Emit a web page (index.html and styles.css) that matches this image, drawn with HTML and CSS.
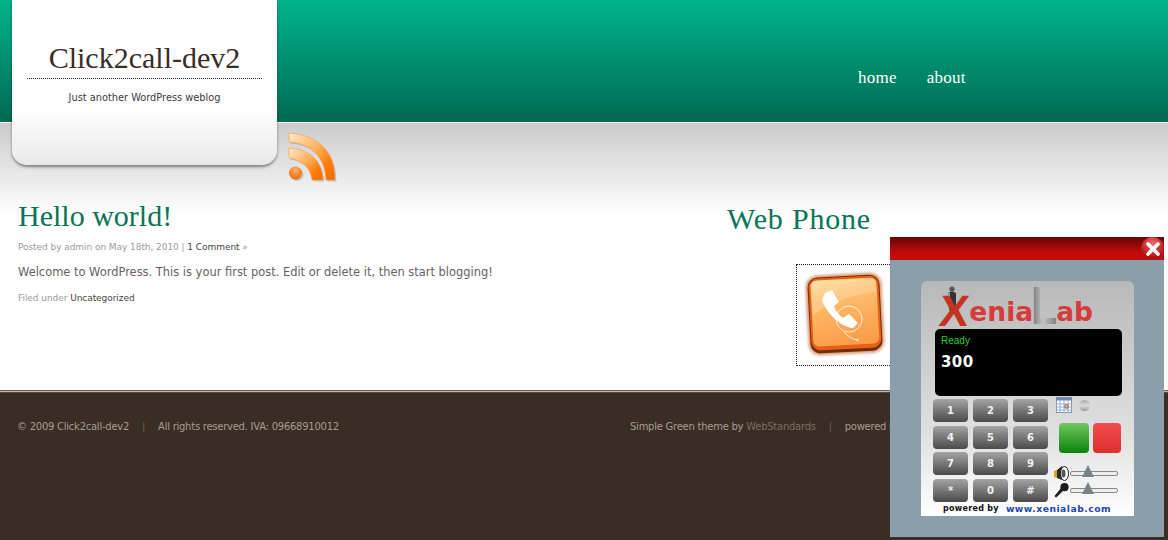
FILE: index.html
```html
<!DOCTYPE html>
<html lang="en">
	<head>
		<meta charset="UTF-8" />
		<meta name="viewport" content="width=device-width, initial-scale=1.0" />
		<title>Click2call-dev2</title>
		<link rel="stylesheet" href="styles.css">
	</head>
	<body>
		<header class="site-header">
			<div class="logo-card">
				<h1 class="site-title">Click2call-dev2</h1>
				<p class="tagline">Just another WordPress weblog</p>
			</div>
			<nav class="main-nav">
				<a href="#">home</a>
				<a href="#">about</a>
			</nav>
		</header>

		<div class="content-band">
			<svg class="rss-icon" width="50" height="52" viewBox="0 0 50 52">
				<defs>
					<linearGradient id="rssGrad" x1="0" y1="0" x2="1" y2="0.9">
						<stop offset="0" stop-color="#ffe6c6" />
						<stop offset="0.5" stop-color="#ffb05a" />
						<stop offset="0.78" stop-color="#ff7d0a" />
						<stop offset="1" stop-color="#f56c00" />
					</linearGradient>
					<radialGradient id="rssDot" cx="0.5" cy="0.3" r="0.7">
						<stop offset="0" stop-color="#ffb069" />
						<stop offset="1" stop-color="#ee6a00" />
					</radialGradient>
				</defs>
				<g fill="#888" opacity="0.4" transform="translate(1.5 1.5)">
					<circle cx="7.5" cy="42" r="6.5" />
					<path d="M1 17 C22 18 34 30 35 49 L24 49 C23 37 14 29 1 27 Z" />
					<path d="M1 2 C30 4 47 20 47 49 L38 49 C37 26 24 13 1 11 Z" />
				</g>
				<circle cx="7.5" cy="42" r="6.5" fill="url(#rssDot)" />
				<path d="M1 17 C22 18 34 30 35 49 L24 49 C23 37 14 29 1 27 Z" fill="url(#rssGrad)" stroke="#f59a45" stroke-width="0.6" />
				<path d="M1 2 C30 4 47 20 47 49 L38 49 C37 26 24 13 1 11 Z" fill="url(#rssGrad)" stroke="#f59a45" stroke-width="0.6" />
			</svg>

			<div class="columns">
				<main class="post">
					<h2 class="post-title">Hello world!</h2>
					<p class="post-meta">Posted by admin on May 18th, 2010 | <a href="#">1 Comment</a> »</p>
					<p class="post-body">Welcome to WordPress. This is your first post. Edit or delete it, then start blogging!</p>
					<p class="post-meta">Filed under <a href="#">Uncategorized</a></p>
				</main>
				<aside class="sidebar">
					<h2 class="widget-title">Web Phone</h2>
					<div class="call-box">
						<svg width="84" height="90" viewBox="0 0 84 90">
							<defs>
								<linearGradient id="tileGrad" x1="0" y1="0" x2="0.2" y2="1">
									<stop offset="0" stop-color="#ffdc94" />
									<stop offset="0.3" stop-color="#ffbf6d" />
									<stop offset="1" stop-color="#fb9f4b" />
								</linearGradient>
								<filter id="tileGlow" x="-10%" y="-10%" width="120%" height="120%">
									<feGaussianBlur stdDeviation="1.6" />
								</filter>
							</defs>
							<g transform="rotate(-3 42 45)">
								<rect x="3" y="5" width="76" height="80" rx="12" fill="#c9744a" opacity="0.75" filter="url(#tileGlow)" />
								<rect x="5" y="7" width="72" height="76" rx="10" fill="#6d2f0c" />
								<rect x="6" y="8" width="70" height="72" rx="9" fill="#ea5f12" />
								<rect x="8" y="10" width="66" height="66" rx="6" fill="url(#tileGrad)" />
								<path d="M9 16 Q9 11 14 11 L68 11 Q73 11 73 16 L73 24 C50 26 28 32 9 44 Z" fill="#fff" opacity="0.2" />
							</g>
							<circle cx="45" cy="50" r="13" fill="none" stroke="#fff" stroke-width="0.8" />
							<path d="M40 63 C43 67 48 70 53 71" fill="none" stroke="#fff" stroke-width="0.8" />
							<circle cx="53.5" cy="71" r="1" fill="#fff" />
							<path d="M21 24 L28 21 L35 33 L30 37 C31 41 35 46 39 49 L45 45 L54 54 L49 59 C37 59 21 42 18 31 Z" fill="#fff" />
						</svg>
					</div>
				</aside>
			</div>
		</div>

		<footer class="site-footer">
			<p class="footer-left">© 2009 Click2call-dev2 <span class="sep">|</span> All rights reserved. IVA: 09668910012</p>
			<p class="footer-right">Simple Green theme by <a href="#">WebStandards</a> <span class="sep">|</span> powered by WordPress</p>
		</footer>

		<div class="phone-popup">
			<div class="popup-bar">
				<span class="popup-close">
					<svg width="14" height="14" viewBox="0 0 14 14">
						<path d="M2 2 L12 12 M12 2 L2 12" stroke="#fff" stroke-width="3.6" stroke-linecap="round" />
					</svg>
				</span>
			</div>
			<div class="phone">
				<div class="xl-logo">
					<svg class="xl-man" width="12" height="26" viewBox="0 0 12 26">
						<circle cx="6" cy="3" r="2.6" fill="#555" />
						<path d="M2 7 Q6 4 10 7 L10 18 L8 26 L4 26 L2 17 Z" fill="#333" />
						<path d="M2 7 L4 7 L4 18 L2 17 Z" fill="#999" />
					</svg>
					<span class="xl-x">X</span><span class="xl-red">enia</span><span class="xl-l">L</span><span class="xl-red">ab</span>
				</div>
				<div class="screen">
					<div class="screen-status">Ready</div>
					<div class="screen-number">300</div>
				</div>
				<div class="phone-lower">
					<div class="keypad">
						<button class="key">1</button>
						<button class="key">2</button>
						<button class="key">3</button>
						<button class="key">4</button>
						<button class="key">5</button>
						<button class="key">6</button>
						<button class="key">7</button>
						<button class="key">8</button>
						<button class="key">9</button>
						<button class="key">*</button>
						<button class="key">0</button>
						<button class="key">#</button>
					</div>
					<div class="phone-side">
						<div class="side-top">
							<svg width="16" height="16" viewBox="0 0 16 16">
								<rect x="0.5" y="0.5" width="15" height="15" fill="#fff" stroke="#7f93b5" />
								<rect x="0.5" y="0.5" width="15" height="3" fill="#6f88b0" />
								<path d="M4 3 V16 M8 3 V16 M12 3 V16 M0 7 H16 M0 10 H16 M0 13 H16" stroke="#8fb0dc" stroke-width="1" />
								<rect x="9" y="8" width="3" height="3" fill="none" stroke="#c8501e" />
							</svg>
							<span class="led"></span>
						</div>
						<div class="call-buttons">
							<span class="call-btn call-green"></span>
							<span class="call-btn call-red"></span>
						</div>
						<div class="slider-row">
							<svg width="15" height="15" viewBox="0 0 15 15">
								<path d="M0 5 L3 4 L3 12 L0 11 Z" fill="#d9a514" />
								<path d="M3 4 L8 0 L11 7 L8 14 L3 12 Z" fill="#2a2a2a" />
								<ellipse cx="10.5" cy="7.5" rx="4" ry="7" fill="#fff" stroke="#222" />
								<ellipse cx="9.5" cy="7.5" rx="2" ry="4" fill="#555" />
							</svg>
							<span class="slider"><span class="thumb"></span></span>
						</div>
						<div class="slider-row">
							<svg width="15" height="15" viewBox="0 0 15 15">
								<path d="M0.5 13 L7 5 L9.5 7.5 L2 14.8 Z" fill="#222" />
								<circle cx="10.5" cy="4.2" r="4.1" fill="#1c1c1c" />
							</svg>
							<span class="slider"><span class="thumb"></span></span>
						</div>
					</div>
				</div>
				<div class="phone-credit">
					<span class="credit-by">powered by</span>
					<span class="credit-url">www.xenialab.com</span>
				</div>
			</div>
		</div>
	</body>
</html>
```

FILE: styles.css
```css
html,
body {
	margin: 0;
	padding: 0;
	height: 100%;
	overflow: hidden;
}

body {
	position: relative;
	color: #6a5f66;
	background: #fff;
	font-family: 'DejaVu Sans', Verdana, sans-serif;
	font-size: 12px;
}

a {
	color: inherit;
	text-decoration: none;
}

h1,
h2,
p {
	margin: 0;
	font-weight: normal;
}

/* header */
.site-header {
	display: flex;
	align-items: flex-start;
	height: 122px;
	background: linear-gradient(#00b48c 0, #00a27e 30px, #006a52 122px);
	border-bottom: 1px solid #fff;
}

.logo-card {
	position: relative;
	z-index: 1;
	flex: none;
	box-sizing: border-box;
	width: 265px;
	height: 165px;
	margin-left: 12px;
	padding: 41px 15px 0;
	text-align: center;
	background: linear-gradient(#fff 0, #fff 110px, #e8e8e8 165px);
	border-radius: 0 0 15px 15px;
	box-shadow: 0 2px 3px rgba(0, 0, 0, 0.45);
}

.site-title {
	height: 37px;
	color: #3a2d28;
	font-family: 'Liberation Serif', serif;
	font-size: 30px;
	line-height: 34px;
	border-bottom: 1px dotted #222;
}

.tagline {
	margin-top: 12px;
	color: #3f3744;
	font-size: 9.8px;
	line-height: 13px;
}

.main-nav {
	display: flex;
	gap: 30px;
	margin: 68px 0 0 581px;
	font-family: 'Liberation Serif', serif;
	font-size: 17px;
	line-height: 19px;
	letter-spacing: 0.25px;
	color: #fff;
}

/* content */
.content-band {
	height: 267px;
	padding-top: 8px;
	box-sizing: border-box;
	background: linear-gradient(#cbcbcb 0, #fff 92px) no-repeat;
}

.rss-icon {
	display: block;
	margin-left: 288px;
}

.columns {
	display: flex;
	margin-top: 16px;
}

.post {
	width: 727px;
	flex: none;
	box-sizing: border-box;
	padding-left: 18px;
}

.post-title,
.widget-title {
	color: #08755a;
	font-family: 'Liberation Serif', serif;
	font-size: 30px;
	line-height: 34px;
}

.widget-title {
	letter-spacing: 0.8px;
}

.post-meta {
	margin-top: 7px;
	color: #a09a9a;
	font-size: 9px;
	line-height: 14px;
	letter-spacing: -0.06px;
}

.post-meta a {
	color: #4c4444;
}

.post-body {
	margin: 10px 0 11px;
	font-size: 11.45px;
	line-height: 16px;
}

.post-body + .post-meta {
	margin-top: 0;
}

.sidebar {
	flex: 1;
	padding-top: 3px;
}

.call-box {
	box-sizing: border-box;
	width: 150px;
	height: 102px;
	margin: 28px 0 0 69px;
	padding: 4px 0 0 7px;
	border: 1px dotted #222;
}

.call-box svg {
	display: block;
}

/* footer */
.site-footer {
	display: flex;
	height: 150px;
	box-sizing: border-box;
	padding: 29px 0 0 17px;
	color: #a89c90;
	background: #3a2d25;
	border-top: 1px solid #6f5f50;
	box-shadow: inset 0 1px 0 #c2b6a8, inset 0 2px 0 #5a4a3c;
	font-size: 10px;
	line-height: 14px;
	letter-spacing: -0.25px;
	white-space: nowrap;
}

.footer-left {
	width: 613px;
	flex: none;
}

.footer-right a {
	color: #7d6d5f;
}

.sep {
	margin: 0 10px;
	color: #6e6055;
}

/* popup with the softphone */
.phone-popup {
	position: absolute;
	top: 237px;
	left: 890px;
	width: 274px;
	height: 300px;
	background: #8a9faa;
}

.popup-bar {
	display: flex;
	justify-content: flex-end;
	height: 23px;
	background: linear-gradient(#640505, #c40b0b 70%);
}

.popup-close {
	display: flex;
	align-items: center;
	justify-content: center;
	width: 23px;
	height: 23px;
	border-radius: 50%;
	background: radial-gradient(circle at 50% 30%, #f07070, #b01010 70%);
}

.phone {
	box-sizing: border-box;
	width: 213px;
	height: 235px;
	margin: 21px 0 0 31px;
	padding: 0 12px;
	background: linear-gradient(#b8b8b8, #e0e0e0 65%, #fff);
	border-radius: 6px 6px 0 0;
}

.xl-logo {
	position: relative;
	display: flex;
	align-items: baseline;
	height: 48px;
	padding-left: 7px;
	box-sizing: border-box;
	font-family: 'DejaVu Sans', sans-serif;
	font-weight: bold;
	font-size: 26.5px;
	line-height: 42px;
	color: #d63c3c;
}

.xl-x {
	font-family: 'Liberation Sans', sans-serif;
	font-size: 44px;
	color: #c5341f;
	transform: skewX(-6deg) translateY(5px);
}

.xl-l {
	margin: -14px -8px 0 -2px;
	padding: 14px 0 8px;
	font-family: 'Liberation Sans', sans-serif;
	font-size: 54px;
	transform: translateY(3px) scaleX(0.8);
	transform-origin: left;
	color: transparent;
	background: linear-gradient(90deg, #6f6f6f, #c4c4c4 45%, #7c7c7c);
	-webkit-background-clip: text;
	background-clip: text;
}

.xl-man {
	position: absolute;
	left: 13px;
	top: 5px;
}

.screen {
	box-sizing: border-box;
	width: 187px;
	height: 67px;
	margin-left: 2px;
	padding: 6px 6px;
	background: #000;
	border-radius: 5px;
}

.screen-status {
	color: #2fd02f;
	font-family: 'Liberation Sans', sans-serif;
	font-size: 10px;
	line-height: 12px;
}

.screen-number {
	margin-top: 6px;
	color: #fff;
	font-size: 15px;
	font-weight: bold;
	line-height: 18px;
	letter-spacing: 0.4px;
}

.phone-lower {
	display: flex;
	margin-top: 3px;
}

.keypad {
	display: grid;
	grid-template-columns: repeat(3, 35px);
	grid-auto-rows: 23px;
	gap: 3.7px 5px;
	flex: none;
}

.key {
	padding: 0;
	color: #f2f2f2;
	background: linear-gradient(#a4a4a4, #4a4a4a);
	border: 0;
	border-radius: 4px;
	font-family: 'DejaVu Sans', sans-serif;
	font-size: 10px;
	font-weight: bold;
}

.phone-side {
	margin-left: 6px;
	width: 68px;
}

.side-top {
	display: flex;
	align-items: center;
	gap: 7px;
	height: 16px;
	margin-left: 2px;
	margin-top: -2px;
}

.led {
	width: 11px;
	height: 11px;
	border-radius: 50%;
	background: linear-gradient(#aaa, #ddd 50%, #999);
}

.call-buttons {
	display: flex;
	gap: 4px;
	margin: 10px 0 13px 5px;
}

.call-btn {
	height: 30px;
	border-radius: 4px;
}

.call-green {
	width: 30px;
	background: linear-gradient(#72c860, #0c8208);
}

.call-red {
	width: 28px;
	background: linear-gradient(#f04e4e, #de2e2e);
}

.slider-row {
	display: flex;
	align-items: center;
	gap: 1px;
	height: 15px;
	margin-bottom: 2px;
}

.slider {
	position: relative;
	width: 46px;
	height: 3px;
	background: #eee;
	border: 1px solid #888;
	border-radius: 2px;
}

.thumb {
	position: absolute;
	left: 11px;
	top: -7px;
	width: 0;
	height: 0;
	border-left: 6px solid transparent;
	border-right: 6px solid transparent;
	border-bottom: 12px solid #76848a;
}

.phone-credit {
	display: flex;
	align-items: center;
	gap: 7px;
	margin-top: 1px;
	font-size: 8px;
	line-height: 11px;
	letter-spacing: 0.3px;
	color: #111;
	white-space: nowrap;
	font-weight: bold;
	padding-left: 10px;
}

.credit-url {
	color: #1c45b0;
	font-size: 9.2px;
	letter-spacing: 0.5px;
}
```
